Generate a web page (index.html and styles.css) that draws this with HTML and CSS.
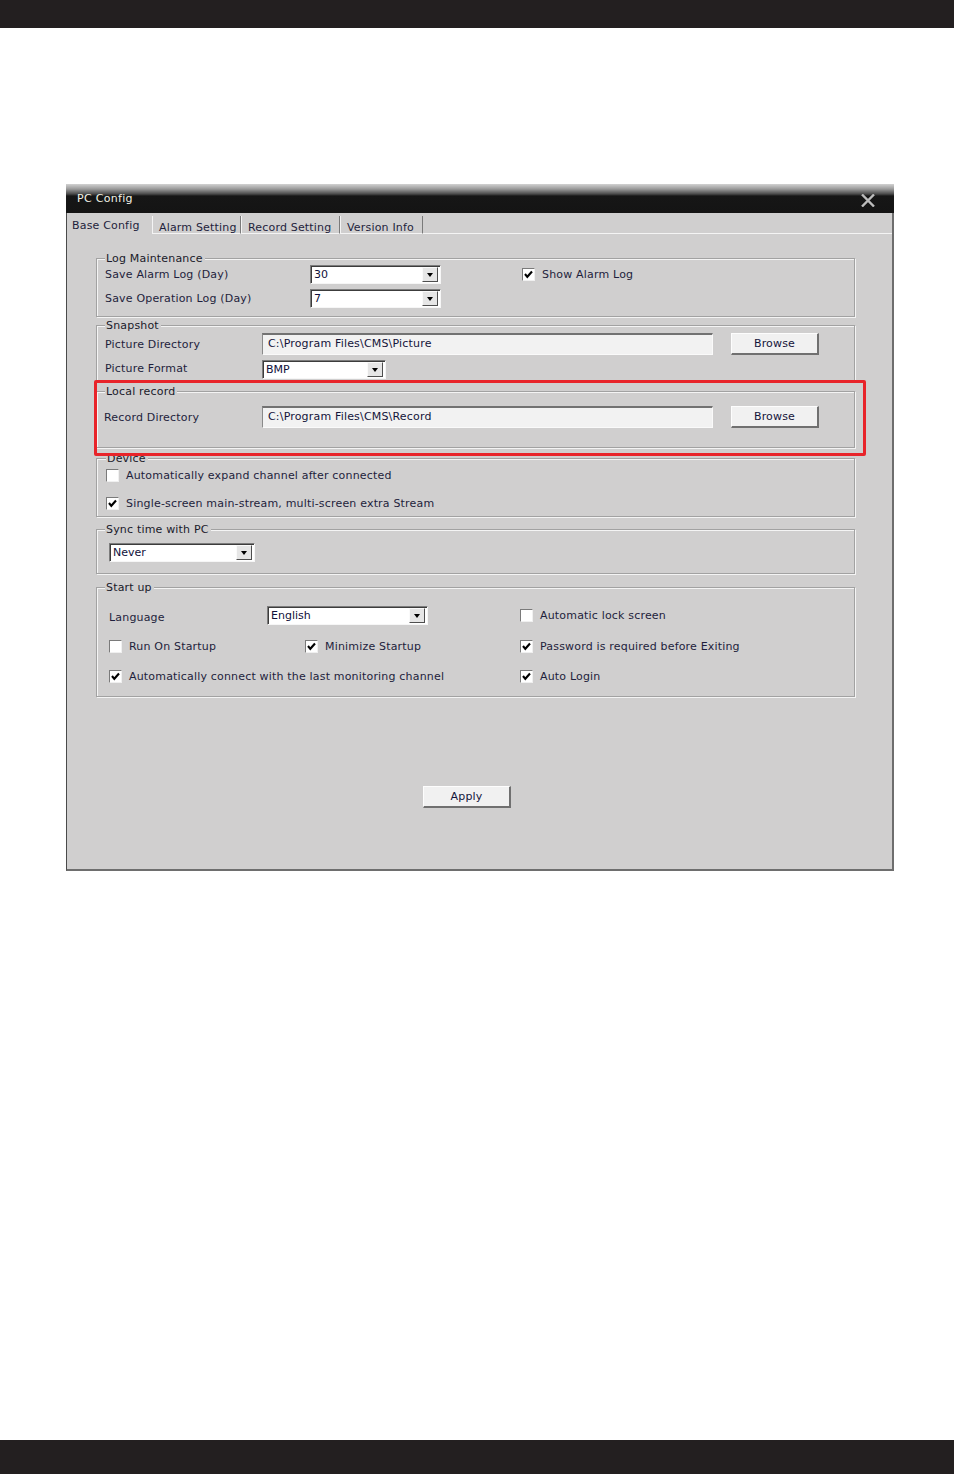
FILE: index.html
```html
<!DOCTYPE html>
<html lang="en">
<head>
<meta charset="utf-8">
<title>PC Config</title>
<link rel="stylesheet" href="styles.css">
</head>
<body>
<div class="topbar"></div>

<div class="window">
  <div class="titlebar">
    <span class="title">PC Config</span>
    <svg class="close" width="14" height="13" viewBox="0 0 14 13"><path d="M1 0.5 L13 12.5 M13 0.5 L1 12.5" stroke="#bcbcbc" stroke-width="2.4" fill="none"/></svg>
  </div>

  <div class="tabs">
    <div class="tab active">Base Config</div>
    <div class="tab t-alarm">Alarm Setting</div>
    <div class="tab t-record">Record Setting</div>
    <div class="tab t-version">Version Info</div>
    <div class="tab-fill"></div>
  </div>

  <div class="panel">
    <div class="group g-log">
      <div class="legend">Log Maintenance</div>
      <div class="row r-log1">
        <span class="label w205">Save Alarm Log (Day)</span>
        <div class="combo w131"><span class="val">30</span><span class="drop"><i></i></span></div>
        <label class="check ml81"><span class="box on"><svg width="11" height="11" viewBox="0 0 11 11"><polyline points="2,5 4.3,7.8 9,2.5" fill="none" stroke="#000" stroke-width="2.1"/></svg></span>Show Alarm Log</label>
      </div>
      <div class="row r-log2">
        <span class="label w205">Save Operation Log (Day)</span>
        <div class="combo w131"><span class="val">7</span><span class="drop"><i></i></span></div>
      </div>
    </div>

    <div class="group g-snap">
      <div class="legend">Snapshot</div>
      <div class="row r-dir">
        <span class="label w157">Picture Directory</span>
        <div class="textbox">C:\Program Files\CMS\Picture</div>
        <button class="btn browse">Browse</button>
      </div>
      <div class="row r-fmt">
        <span class="label w157 fmt">Picture Format</span>
        <div class="combo w124"><span class="val">BMP</span><span class="drop"><i></i></span></div>
      </div>
    </div>

    <div class="group g-local">
      <div class="legend">Local record</div>
      <div class="row r-rec">
        <span class="label w158">Record Directory</span>
        <div class="textbox">C:\Program Files\CMS\Record</div>
        <button class="btn browse">Browse</button>
      </div>
    </div>

    <div class="group g-device">
      <div class="legend">Device</div>
      <label class="check r-dev1"><span class="box"></span>Automatically expand channel after connected</label>
      <label class="check r-dev2"><span class="box on"><svg width="11" height="11" viewBox="0 0 11 11"><polyline points="2,5 4.3,7.8 9,2.5" fill="none" stroke="#000" stroke-width="2.1"/></svg></span>Single-screen main-stream, multi-screen extra Stream</label>
    </div>

    <div class="group g-sync">
      <div class="legend">Sync time with PC</div>
      <div class="combo w146 r-sync"><span class="val">Never</span><span class="drop"><i></i></span></div>
    </div>

    <div class="group g-start">
      <div class="legend">Start up</div>
      <div class="row r-lang">
        <span class="label w158 lang">Language</span>
        <div class="combo w161"><span class="val">English</span><span class="drop"><i></i></span></div>
        <label class="check ml92"><span class="box"></span>Automatic lock screen</label>
      </div>
      <div class="grid3 r-s2">
        <label class="check"><span class="box"></span>Run On Startup</label>
        <label class="check"><span class="box on"><svg width="11" height="11" viewBox="0 0 11 11"><polyline points="2,5 4.3,7.8 9,2.5" fill="none" stroke="#000" stroke-width="2.1"/></svg></span>Minimize Startup</label>
        <label class="check"><span class="box on"><svg width="11" height="11" viewBox="0 0 11 11"><polyline points="2,5 4.3,7.8 9,2.5" fill="none" stroke="#000" stroke-width="2.1"/></svg></span>Password is required before Exiting</label>
      </div>
      <div class="grid3 r-s3">
        <label class="check span2"><span class="box on"><svg width="11" height="11" viewBox="0 0 11 11"><polyline points="2,5 4.3,7.8 9,2.5" fill="none" stroke="#000" stroke-width="2.1"/></svg></span>Automatically connect with the last monitoring channel</label>
        <label class="check"><span class="box on"><svg width="11" height="11" viewBox="0 0 11 11"><polyline points="2,5 4.3,7.8 9,2.5" fill="none" stroke="#000" stroke-width="2.1"/></svg></span>Auto Login</label>
      </div>
    </div>

    <button class="btn apply">Apply</button>
  </div>

  <div class="highlight"></div>
</div>

<div class="bottombar"></div>
</body>
</html>
```

FILE: styles.css
```css
* { box-sizing: border-box; }
html, body { margin: 0; padding: 0; }
body {
  background: #fff;
  min-height: 1474px;
  display: flex;
  flex-direction: column;
  font-family: "DejaVu Sans", Verdana, sans-serif;
  font-size: 11px;
  letter-spacing: 0.18px;
  color: #1e1e3c;
}
.topbar { height: 28px; background: #231f20; flex: none; }
.bottombar { height: 34px; background: #231f20; margin-top: auto; flex: none; }

.window {
  position: relative;
  margin: 156px 0 0 66px;
  width: 828px;
  height: 687px;
  background: #d0cfcf;
  border-left: 1px solid #4a4a4a;
  border-right: 2px solid #6e6e6e;
  border-bottom: 2px solid #6e6e6e;
  display: flex;
  flex-direction: column;
  flex: none;
}

.titlebar {
  height: 29px;
  margin-left: -1px;
  margin-right: -2px;
  background: linear-gradient(#d2d2d2 0, #9a9a9a 5px, #4a4a4a 10px, #161616 12px, #141414 100%);
  display: flex;
  align-items: center;
  padding: 0 19px 0 11px;
  flex: none;
}
.title { color: #f2f2e6; line-height: 13px; margin-top: -1px; letter-spacing: 0.3px; }
.close { margin-left: auto; margin-top: 3px; }

.tabs {
  height: 21px;
  display: flex;
  align-items: flex-end;
  flex: none;
}
.tab {
  height: 18px;
  line-height: 14px;
  padding: 5px 0 0 6px;
  white-space: nowrap;
  border-left: 1px solid #f4f4f4;
  border-right: 1px solid #7a7a7a;
  border-bottom: 1px solid #f4f4f4;
}
.tab.active {
  height: 21px;
  line-height: 14px;
  width: 85px;
  padding: 6px 0 0 5px;
  border: none;
}
.t-alarm { width: 89px; }
.t-record { width: 99px; }
.t-version { width: 83px; }
.tab-fill { flex: 1; height: 1px; background: #f4f4f4; }

.panel {
  flex: 1;
  padding: 0 0 0 29px;
  display: flex;
  flex-direction: column;
  align-items: flex-start;
}

.group {
  width: 759px;
  border: 1px solid #a2a2a2;
  box-shadow: 1px 1px 0 #f4f4f4, inset 1px 1px 0 #f4f4f4;
  padding: 0 0 0 8px;
  flex: none;
}
.legend {
  margin-top: -7px;
  padding: 0 2px 0 1px;
  width: fit-content;
  line-height: 13px;
  height: 13px;
  background: #d0cfcf;
  color: #1a1a2a;
}

.g-log { margin-top: 24px; height: 59px; }
.g-snap { margin-top: 8px; height: 57px; }
.g-local { margin-top: 9px; height: 57px; }
.g-device { margin-top: 10px; height: 59px; padding-left: 9px; }
.g-sync { margin-top: 12px; height: 45px; padding-left: 12px; }
.g-start { margin-top: 13px; height: 110px; padding-left: 12px; }
.g-sync .legend, .g-start .legend { margin-left: -4px; }

.row { display: flex; align-items: center; }
.label { white-space: nowrap; flex: none; }
.w205 { width: 205px; }
.w157 { width: 157px; }
.w158 { width: 158px; }
.ml81 { margin-left: 81px; }
.ml92 { margin-left: 92px; }

.r-log1 { height: 19px; }
.r-log2 { height: 19px; margin-top: 5px; }
.r-dir { height: 22px; margin-top: 1px; }
.r-fmt { height: 19px; margin-top: 5px; }
.fmt { margin-top: -3px; }
.r-rec { height: 22px; margin-top: 8px; margin-left: -1px; }
.r-rec .label { width: 158px; }
.r-dev1 { margin-top: 3px; }
.r-dev2 { margin-top: 14px; }
.r-sync { margin-top: 7px; }
.r-lang { height: 19px; margin-top: 12px; }
.lang { padding-top: 4px; }
.r-s2 { margin-top: 14px; }
.r-s3 { margin-top: 16px; }

.combo {
  height: 19px;
  background: #fff;
  border-top: 1px solid #7c7c7c;
  border-left: 1px solid #7c7c7c;
  border-right: 1px solid #f6f6f6;
  border-bottom: 1px solid #f6f6f6;
  box-shadow: inset 1px 1px 0 #3c3c3c;
  display: flex;
  align-items: center;
  padding: 1px 2px 1px 3px;
  flex: none;
}
.combo .val { flex: 1; color: #10103a; line-height: 13px; letter-spacing: 0; }
.combo .drop {
  width: 16px;
  height: 15px;
  background: #e6e6e6;
  border-top: 1px solid #fafafa;
  border-left: 1px solid #fafafa;
  border-right: 1px solid #4e4e4e;
  border-bottom: 1px solid #4e4e4e;
  display: flex;
  align-items: center;
  justify-content: center;
}
.combo .drop i {
  width: 0; height: 0;
  border-left: 3.5px solid transparent;
  border-right: 3.5px solid transparent;
  border-top: 4px solid #000;
}
.w131 { width: 131px; }
.w124 { width: 124px; }
.w146 { width: 146px; }
.w161 { width: 161px; }

.textbox {
  width: 451px;
  height: 22px;
  background: #f2f2f2;
  border-top: 2px solid #727272;
  border-left: 1px solid #8a8a8a;
  border-right: 1px solid #fafafa;
  border-bottom: 1px solid #fafafa;
  padding: 0 0 0 5px;
  line-height: 17px;
  white-space: nowrap;
  color: #14143a;
  flex: none;
}

.btn {
  font-family: inherit;
  font-size: 11px;
  letter-spacing: 0.18px;
  color: #14143a;
  width: 88px;
  height: 22px;
  background: #f1f1f1;
  border-top: 1px solid #fdfdfd;
  border-left: 1px solid #fdfdfd;
  border-right: 2px solid #707070;
  border-bottom: 2px solid #707070;
  padding: 0;
  flex: none;
}
.browse { margin-left: 18px; }
.apply { margin: 89px 0 0 327px; }

.check {
  display: flex;
  align-items: center;
  height: 14px;
  white-space: nowrap;
  gap: 7px;
}
.check .box {
  width: 13px;
  height: 13px;
  background: #fff;
  border-top: 1px solid #7a7a7a;
  border-left: 1px solid #7a7a7a;
  border-right: 1px solid #f0f0f0;
  border-bottom: 1px solid #f0f0f0;
  display: flex;
  align-items: center;
  justify-content: center;
  flex: none;
}
.grid3 {
  display: grid;
  grid-template-columns: 196px 215px 1fr;
}
.span2 { grid-column: 1 / 3; }

.highlight {
  position: absolute;
  left: 27px;
  top: 196px;
  width: 772px;
  height: 76px;
  border: 3px solid #e8242a;
  border-radius: 2px;
  pointer-events: none;
}
```
